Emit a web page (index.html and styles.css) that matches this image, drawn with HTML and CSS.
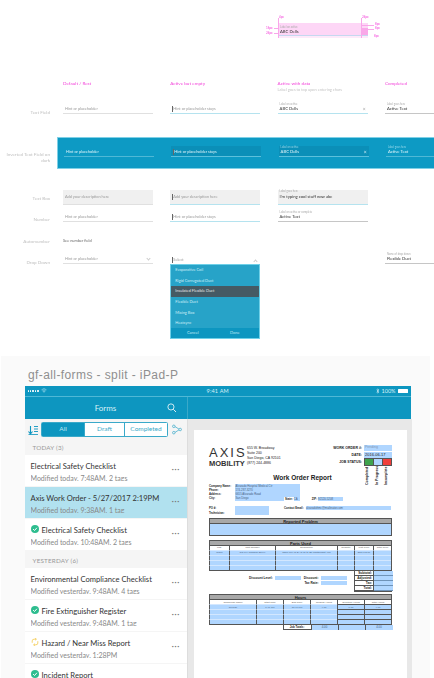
FILE: index.html
```html
<!DOCTYPE html>
<html lang="en">

<head>
    <meta charset="UTF-8">
    <meta name="viewport" content="width=device-width, initial-scale=1.0">
    <title>gf-all-forms</title>
    <link rel="stylesheet" href="styles.css">
</head>

<body>
    <div class="sheet">
        <!-- field states spec -->
        <section class="spec">
            <div class="redline">
                <span class="rl-tag rl-a">4px</span>
                <span class="rl-tag rl-b">24px</span>
                <span class="rl-tag rl-c">16px</span>
                <span class="rl-tag rl-d">24px</span>
                <span class="rl-tag rl-e">8px</span>
                <span class="rl-tag rl-f">8px</span>
                <span class="rl-tag rl-g">8px</span>
                <i class="rl-line v1"></i>
                <i class="rl-line v2"></i>
                <i class="rl-line h1"></i>
                <i class="rl-line h2"></i>
                <i class="rl-line h3"></i>
                <i class="rl-line h4"></i>
                <div class="rl-box">
                    <span class="mini-label">Label on active</span>
                    <span class="value">ABC Dells</span>
                    <span class="rl-arrow"></span>
                </div>
            </div>

            <div class="row row-head">
                <div class="row-label"></div>
                <div class="cell"><div class="col-title">Default / Rest</div></div>
                <div class="cell"><div class="col-title">Active but empty</div></div>
                <div class="cell">
                    <div class="col-title">Active with data</div>
                    <div class="col-note">Label goes to top upon entering chars</div>
                </div>
                <div class="cell"><div class="col-title">Completed</div></div>
            </div>

            <div class="row row-text">
                <div class="row-label">Text Field</div>
                <div class="cell"><div class="field"><span class="hint">Hint or placeholder</span></div></div>
                <div class="cell"><div class="field active"><span class="hint caret">Hint or placeholder stays</span></div></div>
                <div class="cell">
                    <div class="field active">
                        <span class="mini-label">Label on active</span>
                        <span class="value">ABC Dells</span>
                        <span class="clear">×</span>
                    </div>
                </div>
                <div class="cell">
                    <div class="field done wide">
                        <span class="mini-label">Label goes here</span>
                        <span class="value">Active Text</span>
                    </div>
                </div>
            </div>

            <div class="row row-inverted">
                <div class="row-label">Inverted Text Field on dark</div>
                <div class="band">
                    <div class="cell"><div class="field"><span class="hint">Hint or placeholder</span></div></div>
                    <div class="cell"><div class="field shade"><span class="hint caret">Hint or placeholder stays</span></div></div>
                    <div class="cell">
                        <div class="field shade">
                            <span class="mini-label">Label on active</span>
                            <span class="value">ABC Dells</span>
                            <span class="clear">×</span>
                        </div>
                    </div>
                    <div class="cell">
                        <div class="field wide">
                            <span class="mini-label">Label goes here</span>
                            <span class="value">Active Text</span>
                        </div>
                    </div>
                </div>
            </div>

            <div class="row row-box">
                <div class="row-label">Text Box</div>
                <div class="cell"><div class="field box"><span class="hint">Add your description here</span></div></div>
                <div class="cell"><div class="field box active"><span class="hint caret">Add your description here</span></div></div>
                <div class="cell">
                    <div class="field box active labelled">
                        <span class="mini-label">Label goes here</span>
                        <span class="value">I'm typing cool stuff now abc</span>
                    </div>
                </div>
                <div class="cell"></div>
            </div>

            <div class="row row-number">
                <div class="row-label">Number</div>
                <div class="cell"><div class="field"><span class="hint">Hint or placeholder</span></div></div>
                <div class="cell"><div class="field active"><span class="hint caret">Hint or placeholder stays</span></div></div>
                <div class="cell">
                    <div class="field done">
                        <span class="mini-label">Label on active or complete</span>
                        <span class="value">Active Text</span>
                    </div>
                </div>
                <div class="cell"></div>
            </div>

            <div class="row row-auto">
                <div class="row-label">Automumber</div>
                <div class="cell"><div class="see-field">See number field</div></div>
            </div>

            <div class="row row-drop">
                <div class="row-label">Drop Down</div>
                <div class="cell">
                    <div class="field"><span class="hint">Hint or placeholder</span><span class="chev down"></span></div>
                </div>
                <div class="cell">
                    <div class="field plain"><span class="hint caret">Select</span><span class="chev up"></span></div>
                    <div class="picker">
                        <div class="picker-item">Evaporative Coil</div>
                        <div class="picker-item">Rigid Corrugated Duct</div>
                        <div class="picker-item on">Insulated Flexible Duct</div>
                        <div class="picker-item">Flexible Duct</div>
                        <div class="picker-item">Mixing Box</div>
                        <div class="picker-item">Heatsync</div>
                        <div class="picker-foot"><span>Cancel</span><span>Done</span></div>
                    </div>
                </div>
                <div class="cell"></div>
                <div class="cell">
                    <div class="field done wide">
                        <span class="mini-label">Name of drop down</span>
                        <span class="value">Flexible Duct</span>
                    </div>
                </div>
            </div>
        </section>

        <!-- artboard -->
        <section class="board">
            <div class="board-title">gf-all-forms - split - iPad-P</div>
            <div class="ipad">
                <div class="status">
                    <div class="status-left">
                        <span class="signal"><i></i><i></i><i></i><i></i><i></i></span>
                        <svg class="wifi" viewBox="0 0 12 9"><path d="M1 3.2a7 7 0 0 1 10 0M2.8 5a4.4 4.4 0 0 1 6.4 0M6 8.2 4.5 6.6a2 2 0 0 1 3 0z" fill="none" stroke="#cfeef7" stroke-width="1"/></svg>
                    </div>
                    <div class="status-time">9:41 AM</div>
                    <div class="status-right">
                        <svg class="bt" viewBox="0 0 6 10"><path d="M1 2.6 5 6.8 3 8.8V1.2l2 2L1 7.4" fill="none" stroke="#e6f6fb" stroke-width=".9"/></svg>
                        <span>100%</span>
                        <span class="battery"></span>
                    </div>
                </div>
                <div class="navbar">
                    <div class="nav-left">
                        <span class="nav-title">Forms</span>
                        <svg class="search" viewBox="0 0 12 12"><circle cx="5" cy="5" r="3.9" fill="none" stroke="#fff" stroke-width="1"/><path d="m8 8 3.4 3.4" stroke="#fff" stroke-width="1.1"/></svg>
                    </div>
                </div>
                <div class="split">
                    <aside class="master">
                        <div class="toolbar">
                            <svg class="sort" viewBox="0 0 10 10"><path d="M2.5 1v7.5M.5 6.5l2 2.3 2-2.3" fill="none" stroke="#0d96c0" stroke-width="1.1"/><path d="M6 1.5h4M6 4h4M6 6.5h4M.5 9.6h9.5" stroke="#0d96c0" stroke-width=".9"/></svg>
                            <div class="segments">
                                <span class="seg on">All</span>
                                <span class="seg">Draft</span>
                                <span class="seg">Completed</span>
                            </div>
                            <svg class="branch" viewBox="0 0 11 11"><g fill="none" stroke="#3aa9c9" stroke-width=".8"><circle cx="2" cy="2" r="1.4"/><circle cx="2" cy="9" r="1.4"/><circle cx="9" cy="5.5" r="1.4"/><path d="M3.4 2.4 7.6 5M3.4 8.6 7.6 6"/></g></svg>
                        </div>

                        <div class="group first">TODAY (3)</div>
                        <div class="item">
                            <div class="item-body">
                                <div class="item-title">Electrical Safety Checklist</div>
                                <div class="item-sub">Modified today, 7:48AM, 2 tags</div>
                            </div>
                            <span class="dots">•••</span>
                        </div>
                        <div class="item selected">
                            <div class="item-body">
                                <div class="item-title">Axis Work Order - 5/27/2017 2:19PM</div>
                                <div class="item-sub">Modified today, 9:38AM, 1 tag</div>
                            </div>
                            <span class="dots">•••</span>
                        </div>
                        <div class="item">
                            <div class="item-body">
                                <div class="item-title">
                                    <svg class="check" viewBox="0 0 10 10"><circle cx="5" cy="5" r="5" fill="#2ebd8f"/><path d="m2.6 5 1.8 1.9 3-3.4" fill="none" stroke="#fff" stroke-width="1.2"/></svg>
                                    Electrical Safety Checklist
                                </div>
                                <div class="item-sub">Modified today, 10:48AM, 2 tags</div>
                            </div>
                            <span class="dots">•••</span>
                        </div>

                        <div class="group">YESTERDAY (6)</div>
                        <div class="item">
                            <div class="item-body">
                                <div class="item-title">Environmental Compliance Checklist</div>
                                <div class="item-sub">Modified yesterday, 9:48AM, 4 tags</div>
                            </div>
                            <span class="dots">•••</span>
                        </div>
                        <div class="item">
                            <div class="item-body">
                                <div class="item-title">
                                    <svg class="check" viewBox="0 0 10 10"><circle cx="5" cy="5" r="5" fill="#2ebd8f"/><path d="m2.6 5 1.8 1.9 3-3.4" fill="none" stroke="#fff" stroke-width="1.2"/></svg>
                                    Fire Extinguisher Register
                                </div>
                                <div class="item-sub">Modified yesterday, 9:48AM, 1 tag</div>
                            </div>
                            <span class="dots">•••</span>
                        </div>
                        <div class="item">
                            <div class="item-body">
                                <div class="item-title">
                                    <svg class="check" viewBox="0 0 10 10"><path d="M1.5 6V3.6Q1.5 1.5 4 1.5h2.5M5.2.2l1.5 1.3L5.2 2.8M8.5 4v2.4Q8.5 8.5 6 8.5H3.5M4.8 7.2 3.3 8.5l1.500 1.300" fill="none" stroke="#f2c94c" stroke-width="1"/></svg>
                                    Hazard / Near Miss Report
                                </div>
                                <div class="item-sub">Modified yesterday, 1:28PM</div>
                            </div>
                            <span class="dots">•••</span>
                        </div>
                        <div class="item">
                            <div class="item-body">
                                <div class="item-title">
                                    <svg class="check" viewBox="0 0 10 10"><circle cx="5" cy="5" r="5" fill="#2ebd8f"/><path d="m2.6 5 1.8 1.9 3-3.4" fill="none" stroke="#fff" stroke-width="1.2"/></svg>
                                    Incident Report
                                </div>
                            </div>
                        </div>
                    </aside>

                    <main class="detail">
                        <div class="page">
                            <div class="form-top">
                                <div class="logo">
                                    <div class="logo-axis">AXIS</div>
                                    <div class="logo-mob">MOBILITY</div>
                                </div>
                                <div class="address">655 W. Broadway<br>Suite 200<br>San Diego, CA 92101<br>(877) 244-4886</div>
                                <div class="order">
                                    <div class="order-row"><b>WORK ORDER #:</b><span class="blue order-val pale">Pending</span></div>
                                    <div class="order-row"><b>DATE:</b><span class="blue order-val">2016-06-17</span></div>
                                    <div class="order-row"><b>JOB STATUS:</b>
                                        <span class="status-box"><i class="s-green"></i><i class="s-blue"></i><i class="s-red"></i></span>
                                    </div>
                                    <div class="vert-labels"><span>Completed</span><span>In Progress</span><span>Incomplete</span></div>
                                </div>
                            </div>
                            <h1 class="form-title">Work Order Report</h1>

                            <div class="company">
                                <div class="company-labels"><b>Company Name:</b><b>Phone:</b><b>Address:</b><b>City:</b></div>
                                <div class="company-vals blue"><span>Alvarado Hospital Medical Ctr</span><span>174-287-3270</span><span>6655 Alvarado Road</span><span>San Diego</span></div>
                                <div class="company-extra"><b>State:</b><span class="blue">CA</span><b class="zip">ZIP:</b><span class="blue zip-val">92120-5208</span></div>
                            </div>

                            <div class="po">
                                <div class="po-labels"><b>PO #:</b><b>Technician:</b></div>
                                <div class="po-box blue"></div>
                                <b class="po-mail">Contact Email:</b>
                                <span class="po-val blue">alvaradohmc@mailinator.com</span>
                            </div>

                            <div class="section-head">Reported Problem</div>
                            <div class="problem blue"></div>

                            <div class="section-head parts-head">Parts Used</div>
                            <table class="grid parts">
                                <tr><th>Mfg.</th><th>Part Number</th><th>Description</th><th>Quantity</th><th>Unit Price</th><th>Total Price</th></tr>
                                <tr><td>Cisco</td><td>CS-KIX-CTS500-25-K9</td><td>5500 WLAN 2/AC up to 25 Lightweight APs</td><td></td><td>$15,995.00</td><td></td></tr>
                                <tr><td></td><td></td><td></td><td></td><td></td><td></td></tr>
                                <tr><td></td><td></td><td></td><td></td><td></td><td></td></tr>
                                <tr><td></td><td></td><td></td><td></td><td></td><td></td></tr>
                            </table>

                            <div class="sums">
                                <div class="discounts">
                                    <div class="disc-col">
                                        <div class="disc-row"><b>Discount Level:</b><span class="blue disc-level"></span></div>
                                    </div>
                                    <div class="disc-col">
                                        <div class="disc-row"><b>Discount:</b><span class="blue disc-val"></span></div>
                                        <div class="disc-row"><b>Tax Rate:</b><span class="blue disc-val"></span></div>
                                    </div>
                                </div>
                                <div class="totals">
                                    <b>Subtotal:</b><span></span>
                                    <b>Adjusted:</b><span></span>
                                    <b>Tax:</b><span></span>
                                    <b>Total:</b><span></span>
                                </div>
                            </div>

                            <div class="section-head hours-head">Hours</div>
                            <table class="grid hours">
                                <tr><th>Technician Name</th><th>Start Time</th><th>End Time</th><th>Regular Hours</th><th>Overtime Hours</th><th>Total Hours</th></tr>
                                <tr><td>George</td><td>6:46 PM</td><td>10:46 PM</td><td>4.00</td><td>0.00</td><td>4.00</td></tr>
                                <tr><td></td><td></td><td></td><td></td><td></td><td></td></tr>
                                <tr><td></td><td></td><td></td><td></td><td></td><td></td></tr>
                                <tr><td></td><td></td><td></td><td></td><td></td><td></td></tr>
                            </table>
                            <div class="job-totals">
                                <b>Job Totals:</b><span>4.00</span><span></span><span>4.00</span>
                            </div>
                        </div>
                    </main>
                </div>
            </div>
        </section>
    </div>
</body>

</html>
```

FILE: styles.css
```css
html,
body {
    margin: 0;
    padding: 0;
    background: #fff;
}

body {
    width: 434px;
    height: 678px;
    overflow: hidden;
    font-family: 'Lato', sans-serif;
    color: #333;
}

.sheet {
    width: 434px;
    height: 678px;
    overflow: hidden;
    filter: blur(0.35px); /* the reference is a scaled-down capture */
}

/* ---------- spec ---------- */

.spec {
    position: relative;
    height: 356px;
    padding-top: 79px;
    box-sizing: border-box;
    overflow: hidden;
}

.row {
    display: flex;
    width: 500px;
}

.row-label {
    flex: none;
    width: 50px;
    margin-right: 13px;
    text-align: right;
    font-size: 4.6px;
    line-height: 6px;
    color: #c0c0c0;
}

.cell {
    flex: none;
    position: relative;
    width: 107.3px;
}

.col-title {
    font-size: 4.6px;
    line-height: 8px;
    color: #f23fd8;
}

.col-note {
    font-size: 3.9px;
    line-height: 5px;
    color: #c4c4c4;
}

.field {
    position: relative;
    display: flex;
    flex-direction: column;
    justify-content: flex-end;
    box-sizing: border-box;
    width: 90px;
    height: 14px;
    padding: 0 2px 1px;
    border-bottom: 1px solid #e0e0e0;
}

.field.active {
    border-bottom-color: #b5e3ef;
}

.field.done {
    border-bottom-color: #c6c6c6;
}

.field.wide {
    width: 110px;
}

.field.plain {
    border-bottom: 0;
}

.hint {
    font-size: 3.9px;
    line-height: 6px;
    color: #999;
    white-space: nowrap;
}

.caret {
    border-left: 0.7px solid #666;
}

.value {
    font-size: 4.2px;
    line-height: 6px;
    color: #333;
    white-space: nowrap;
}

.mini-label {
    font-size: 2.7px;
    line-height: 3.5px;
    color: #aaa;
    white-space: nowrap;
}

.clear {
    position: absolute;
    right: 2px;
    bottom: 1px;
    font-size: 5px;
    line-height: 6px;
    color: #999;
}

.row-head {
    height: 21px;
}

.row-text {
    height: 37px;
}

.row-text .row-label {
    padding-top: 9px;
}

.row-inverted {
    height: 53px;
}

.row-inverted .row-label {
    margin-right: 7px;
    padding-top: 14px;
}

.band {
    display: flex;
    flex: none;
    box-sizing: border-box;
    width: 400px;
    height: 32px;
    padding: 5px 0 0 6px;
    background: #0d9ac4;
    border-top: 1px solid #7fd0e6;
    border-bottom: 1px solid #7fd0e6;
    border-left: 1px solid #7fd0e6;
}

.band .field {
    border-bottom-color: #4fb8d6;
}

.band .hint,
.band .value {
    color: #e2f5fa;
}

.band .mini-label {
    color: #9ad9ea;
}

.band .clear {
    color: #e2f5fa;
}

.band .field.shade {
    background: linear-gradient(transparent 3px, #0b8fb8 3px);
    border-bottom-color: #5cc0dc;
}

.row-box {
    height: 18px;
}

.row-box .row-label {
    padding-top: 5px;
}

.field.box {
    height: 15px;
    justify-content: flex-start;
    padding-top: 4px;
    background: #f0f0f0;
}

.field.box.labelled {
    padding-top: 0;
}

.row-number {
    height: 29.5px;
}

.row-number .row-label {
    padding-top: 8px;
}

.row-auto {
    height: 12.5px;
}

.see-field {
    font-size: 3.9px;
    line-height: 6px;
    color: #666;
}

.row-drop .row-label {
    padding-top: 9px;
}

.chev {
    position: absolute;
    right: 3px;
    bottom: 3px;
    width: 2px;
    height: 2px;
    border-right: 0.4px solid #ccc;
    border-bottom: 0.4px solid #ccc;
    transform: rotate(45deg);
}

.chev.up {
    bottom: 1.5px;
    transform: rotate(225deg);
}

.picker {
    position: absolute;
    top: 14px;
    left: 0;
    width: 90px;
    box-sizing: border-box;
    background: #27a3c8;
    border: 0.7px solid #6fd0e8;
}

.picker-item {
    height: 10.7px;
    padding-left: 4px;
    font-size: 3.9px;
    line-height: 10.7px;
    color: #cfeef7;
}

.picker-item.on {
    background: #455a64;
    color: #e6e6e6;
}

.picker-foot {
    display: flex;
    justify-content: space-around;
    height: 10px;
    margin-top: -1px;
    padding-right: 4px;
    background: #0d96c0;
    font-size: 4px;
    line-height: 10px;
    color: #bfe8f3;
}

/* redline, sits on its own spot on the canvas */

.redline {
    position: absolute;
    top: 0;
    left: 270px;
    width: 120px;
    height: 45px;
}

.rl-box {
    position: absolute;
    top: 23px;
    left: 8px;
    box-sizing: border-box;
    display: flex;
    flex-direction: column;
    width: 90px;
    height: 13px;
    padding: 2.5px 2px 0;
    background: #fdd6f6;
    border-bottom: 1px solid #c5d8f0;
    box-shadow: 0 2px 0 #fdeafa;
}

.rl-arrow {
    position: absolute;
    right: 0;
    bottom: 0;
    width: 7px;
    height: 7px;
    background: #f9a8e8;
}

.rl-tag {
    position: absolute;
    font-size: 3px;
    line-height: 4px;
    color: #f23fd8;
}

.rl-line {
    position: absolute;
    z-index: 1;
    background: #f9a6ea;
}

.rl-line.v1 { top: 18px; left: 8px; width: 0.5px; height: 20px; }
.rl-line.v2 { top: 18px; left: 91px; width: 0.5px; height: 20px; }
.rl-line.h1 { top: 28px; left: 4px; width: 4px; height: 0.5px; }
.rl-line.h2 { top: 33px; left: 4px; width: 4px; height: 0.5px; }
.rl-line.h3 { top: 24.5px; left: 92px; width: 12px; height: 0.5px; }
.rl-line.h4 { top: 28.5px; left: 92px; width: 12px; height: 0.5px; }

.rl-a { top: 15px; left: 9px; }
.rl-b { top: 15px; left: 92px; }
.rl-c { top: 26px; left: -4px; }
.rl-d { top: 31px; left: -4px; }
.rl-e { top: 22px; left: 105px; }
.rl-f { top: 26px; left: 105px; }
.rl-g { top: 34px; left: 104px; }

/* ---------- artboard ---------- */

.board {
    height: 322px;
    margin: 0 4px 0 1px;
    padding-top: 11px;
    box-sizing: border-box;
    background: #fafafa;
}

.board-title {
    height: 18.5px;
    padding-left: 27px;
    font-family: 'Liberation Sans', sans-serif;
    font-size: 12px;
    line-height: 16px;
    letter-spacing: 0.4px;
    color: #8f8f8f;
}

.ipad {
    width: 386.5px;
    margin-left: 23.5px;
    background: #e8e8e8;
}

.status {
    display: flex;
    align-items: center;
    height: 10.5px;
    padding: 0 3.5px 0 3px;
    background: #0d96c0;
    border-bottom: 0.5px solid #4fb8d6;
    font-size: 5.5px;
    color: #d9f1f7;
}

.status-left {
    display: flex;
    align-items: center;
    gap: 2px;
    width: 160px;
}

.signal {
    display: flex;
    gap: 0.8px;
}

.signal i {
    width: 1.6px;
    height: 1.6px;
    border-radius: 50%;
    background: #fff;
}

.wifi {
    width: 6px;
    height: 5px;
}

.status-time {
    flex: 1;
    padding-left: 19px;
    letter-spacing: 0.2px;
}

.status-right {
    display: flex;
    align-items: center;
    gap: 2px;
}

.bt {
    width: 3.5px;
    height: 6px;
}

.battery {
    width: 10px;
    height: 3.5px;
    background: #fff;
    border-radius: 0.5px;
}

.navbar {
    height: 21.5px;
    background: #0d96c0;
}

.nav-left {
    display: flex;
    align-items: center;
    justify-content: center;
    position: relative;
    width: 162px;
    height: 100%;
    border-right: 0.5px solid #3aa9c9;
}

.nav-title {
    font-size: 8px;
    color: #d8f1f7;
}

.search {
    position: absolute;
    right: 10px;
    top: 6px;
    width: 9.5px;
    height: 9.5px;
}

.split {
    display: flex;
}

.master {
    flex: none;
    width: 162.5px;
    background: #f5f5f5;
}

.toolbar {
    display: flex;
    align-items: flex-start;
    height: 24px;
    box-sizing: border-box;
    padding: 3.5px 3px 0 3.5px;
    background: #f5f5f5;
}

.sort {
    width: 10px;
    height: 10px;
    margin-top: 2.5px;
}

.segments {
    display: flex;
    width: 127px;
    height: 14.5px;
    margin-left: 3px;
    box-sizing: border-box;
    background: #fff;
    border: 1px solid #3aa9c9;
    border-radius: 1.5px;
}

.seg {
    flex: 1;
    font-size: 6.5px;
    line-height: 12.5px;
    text-align: center;
    color: #3aa9c9;
    border-left: 0.7px solid #3aa9c9;
}

.seg:nth-child(1) {
    flex: none;
    width: 42px;
    border-left: 0;
}

.seg:nth-child(3) {
    flex: none;
    width: 42px;
}

.seg.on {
    background: #0d96c0;
    color: #bfe8f3;
}

.branch {
    width: 10px;
    height: 11px;
    margin: 1.5px 0 0 3.5px;
}

.group {
    height: 17px;
    padding-left: 8px;
    font-size: 6.3px;
    line-height: 20px;
    letter-spacing: 0.2px;
    color: #999;
    background: #f5f5f5;
}

.group.first {
    height: 12px;
    line-height: 10px;
}

.item {
    display: flex;
    align-items: center;
    height: 31px;
    margin-bottom: 1px;
    padding: 0 6px;
    background: #fff;
}

.item.selected {
    background: #b1e1ef;
}

.item-body {
    flex: 1;
    align-self: flex-start;
    padding-top: 7.5px;
}

.item-title {
    display: flex;
    align-items: center;
    gap: 3px;
    height: 8px;
    font-size: 7.6px;
    line-height: 8px;
    color: #333;
    white-space: nowrap;
}

.item-sub {
    height: 7.5px;
    margin-top: 3.5px;
    overflow: hidden;
    font-size: 7px;
    line-height: 8px;
    color: #888;
    white-space: nowrap;
}

.check {
    width: 8px;
    height: 8px;
    margin-top: -2px;
}

.dots {
    font-size: 3.5px;
    letter-spacing: 0.7px;
    color: #777;
    margin-right: 1px;
}

/* ---------- detail / work order ---------- */

.detail {
    flex: 1;
    padding: 11px 5px 0 6px;
    height: 260px;
    background: #e8e8e8;
    border-left: 0.5px solid #ddd;
}

.page {
    height: 260px;
    box-sizing: border-box;
    padding: 15px 15px 0;
    background: #fff;
    font-family: 'Liberation Sans', sans-serif;
    color: #222;
}

.page b {
    font-weight: bold;
}

.blue {
    background: #b0d6ff;
}

.form-top {
    display: flex;
    height: 24px;
}

.logo {
    width: 38px;
    color: #333;
}

.logo-axis {
    font-size: 13px;
    line-height: 15px;
    letter-spacing: 2px;
}

.logo-mob {
    font-size: 7.5px;
    line-height: 8px;
    font-weight: bold;
}

.address {
    width: 68px;
    margin-top: 1px;
    font-size: 3.5px;
    line-height: 5.3px;
}

.order {
    position: relative;
    flex: 1;
    font-size: 3.5px;
}

.order-row {
    display: flex;
    justify-content: flex-end;
    align-items: center;
    gap: 2px;
    height: 7px;
    line-height: 5px;
}

.order-val {
    width: 27px;
    height: 5.5px;
    padding-left: 1px;
    line-height: 5.5px;
    font-size: 4px;
}

.order-val.pale {
    font-size: 3.5px;
    color: #7c97b5;
}

.status-box {
    display: flex;
    width: 28px;
    height: 8px;
    box-sizing: border-box;
    border: 0.7px solid #555;
}

.status-box i {
    flex: 1;
}

.s-green { background: #3fa34d; }
.s-blue { background: #b0d6ff; border-left: 0.7px solid #555; border-right: 0.7px solid #555; }
.s-red { background: #f0403c; }

.vert-labels {
    position: absolute;
    top: 19px;
    right: 3.5px;
    display: flex;
    gap: 3.5px;
    writing-mode: vertical-rl;
    flex-direction: column;
    transform: rotate(180deg);
    font-size: 3.5px;
    font-weight: bold;
    line-height: 6px;
    height: 21px;
}

.form-title {
    margin: 4px 0 0;
    height: 11px;
    padding-left: 4px;
    text-align: center;
    font-size: 6.5px;
    line-height: 9px;
}

.company {
    display: flex;
    height: 22px;
    font-size: 2.8px;
}

.company-labels,
.company-vals {
    display: flex;
    flex-direction: column;
}

.company-labels {
    width: 26px;
}

.company-labels b,
.company-vals span {
    height: 4.3px;
    line-height: 4.3px;
}

.company-vals {
    width: 65px;
    height: 17.5px;
    padding-left: 0.5px;
    box-sizing: border-box;
    color: #45607d;
}

.company-extra {
    display: flex;
    align-self: flex-start;
    height: 4.5px;
    margin: 13px 0 0 -16px;
    line-height: 4.5px;
    background: #fff;
}

.company-extra b {
    margin-left: 1px;
    padding-right: 1px;
}

.company-extra .blue {
    width: 6px;
    color: #45607d;
}

.company-extra .zip {
    margin-left: 12px;
}

.company-extra .blue.zip-val {
    width: 25px;
}

.po {
    display: flex;
    height: 12.5px;
    font-size: 2.8px;
}

.po-labels {
    display: flex;
    flex-direction: column;
    width: 26px;
    line-height: 5px;
}

.po-box {
    width: 34px;
    height: 9px;
}

.po-mail {
    margin-left: 15px;
    line-height: 4.5px;
    width: 22px;
}

.po-val {
    width: 85px;
    height: 4.5px;
    line-height: 4.5px;
    color: #45607d;
}

.section-head {
    box-sizing: border-box;
    height: 6px;
    text-align: center;
    font-size: 4px;
    font-weight: bold;
    line-height: 5px;
    background: #a8a8a8;
    border: 0.7px solid #555;
    border-bottom: 0.5px solid #555;
}

.problem {
    box-sizing: border-box;
    height: 12px;
    border: 0.7px solid #555;
    border-top: 0;
}

.parts-head {
    margin-top: 3.5px;
}

.grid {
    box-sizing: border-box;
    width: 183px;
    table-layout: fixed;
    border-collapse: separate;
    border-spacing: 0;
    background: #b0d6ff;
    border-bottom: 1px solid #555;
    border-right: 1px solid #555;
}

.grid th,
.grid td {
    box-sizing: border-box;
    padding: 0;
    height: 5px;
    overflow: hidden;
    white-space: nowrap;
    text-align: center;
    font-size: 2.5px;
    line-height: 3px;
    color: #45607d;
    border-left: 1px solid #555;
}

.grid td {
    border-top: 0.5px solid #d3e7ff;
}

.grid th {
    height: 4px;
    font-weight: normal;
    background: #fff;
    color: #555;
}

.parts th:nth-child(1) { width: 20px; }
.parts th:nth-child(2) { width: 46px; }
.parts th:nth-child(3) { width: 62px; }
.parts th:nth-child(4) { width: 17px; }
.parts th:nth-child(5) { width: 19px; }

.hours th:nth-child(1) { width: 47px; }

.hours tr:nth-child(n+2) td:nth-child(n+5) {
    border-top: 0.5px solid #555;
}

.sums {
    display: flex;
    height: 21px;
    font-size: 3.2px;
}

.discounts {
    display: flex;
    gap: 3px;
    padding-top: 5px;
    flex: 1;
    justify-content: flex-end;
    padding-right: 7px;
}

.disc-row {
    display: flex;
    align-items: center;
    justify-content: flex-end;
    gap: 2px;
    height: 5px;
}

.disc-level {
    width: 26px;
    height: 4.5px;
}

.disc-val {
    width: 26px;
    height: 4.5px;
}

.totals {
    display: grid;
    grid-template-columns: 19px 19px;
    grid-auto-rows: 5px;
    box-sizing: border-box;
    height: 21px;
    width: 38.5px;
    border: 0.7px solid #555;
    border-top: 0;
    line-height: 5px;
    text-align: right;
}

.totals b {
    padding-right: 0.5px;
    border-right: 0.7px solid #555;
    border-bottom: 0.3px solid #555;
}

.totals span {
    background: #b0d6ff;
    border-bottom: 0.3px solid #6f93b8;
}

.hours-head {
    margin-top: 2.5px;
}

.job-totals {
    display: grid;
    grid-template-columns: 27px 27px 27px 28px;
    box-sizing: border-box;
    width: 109.5px;
    height: 5px;
    margin-left: 73.5px;
    font-size: 2.8px;
    line-height: 4.5px;
    text-align: center;
    border: 0.7px solid #555;
    border-top: 0;
}

.job-totals span {
    background: #b0d6ff;
    border-left: 0.7px solid #555;
    color: #45607d;
}
```
